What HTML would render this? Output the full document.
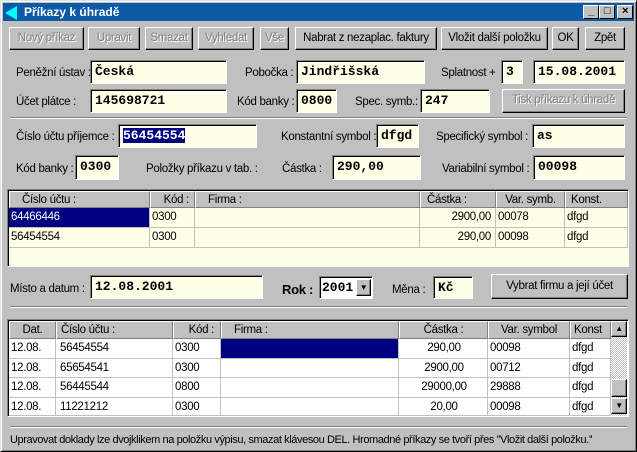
<!DOCTYPE html>
<html><head><meta charset="utf-8"><style>
*{box-sizing:border-box;margin:0;padding:0}
body{width:637px;height:452px;background:#c0c0c0;font-family:"Liberation Sans",Arial,sans-serif;font-size:11.5px;color:#000;position:relative;overflow:hidden;letter-spacing:-0.3px}
.a{position:absolute}
.win{left:0;top:0;width:637px;height:452px;border:1px solid;border-color:#dfdfdf #000 #000 #dfdfdf;box-shadow:inset 1px 1px #fff,inset -1px -1px #808080}
.title{left:3px;top:3px;width:631px;height:18px;background:#0c5aa6;color:#fff;font-weight:bold;font-size:12px;line-height:18px;padding-left:21px;letter-spacing:0}
.tb{top:5px;width:16px;height:14px;background:#c0c0c0;border:1px solid;border-color:#fff #000 #000 #fff;font-size:11px;line-height:11px;text-align:center;font-weight:bold}
.btn{border:1px solid;border-color:#fff #000 #000 #fff;box-shadow:inset -1px -1px #808080;text-align:center;line-height:21px;background:#c0c0c0;white-space:nowrap}
.dis{color:#808080;text-shadow:1px 1px #fff}
.in{background:#ffffe8;border:1px solid;border-color:#808080 #fff #fff #808080;box-shadow:inset 1px 1px #000;font-family:"Liberation Mono",monospace;font-weight:bold;font-size:13px;padding-left:4px;line-height:21px;letter-spacing:0}
.lb{white-space:nowrap;line-height:14px}
.sep{height:2px;border-top:1px solid #808080;border-bottom:1px solid #fff}
.grid{border:1px solid;border-color:#808080 #fff #fff #808080;box-shadow:inset 1px 1px #000}
.hd{background:#c0c0c0;border:1px solid;border-color:#fff #808080 #808080 #fff;line-height:16px;white-space:nowrap;overflow:hidden}
.cl{border-right:1px solid #c0c0c0;border-bottom:1px solid #c0c0c0;line-height:19px;padding-left:2px;white-space:nowrap;overflow:hidden}
.r{text-align:right;padding-right:8px}
</style></head><body>
<div class="a win"></div>
<div class="a title">Příkazy k úhradě</div>
<div class="a" style="left:5px;top:6px;width:0;height:0;border-top:7px solid transparent;border-bottom:7px solid transparent;border-right:12px solid #00ffff"></div>
<div class="a tb" style="left:583px">_</div>
<div class="a tb" style="left:599px">□</div>
<div class="a tb" style="left:617px">×</div>

<div class="a btn dis" style="left:9px;top:27px;width:75px;height:23px">Nový příkaz</div>
<div class="a btn dis" style="left:88px;top:27px;width:52px;height:23px">Upravit</div>
<div class="a btn dis" style="left:145px;top:27px;width:48px;height:23px">Smazat</div>
<div class="a btn dis" style="left:198px;top:27px;width:56px;height:23px">Vyhledat</div>
<div class="a btn dis" style="left:260px;top:27px;width:29px;height:23px">Vše</div>
<div class="a btn" style="left:295px;top:27px;width:142px;height:23px">Nabrat z nezaplac. faktury</div>
<div class="a btn" style="left:441px;top:27px;width:107px;height:23px">Vložit další položku</div>
<div class="a btn" style="left:552px;top:27px;width:27px;height:23px">OK</div>
<div class="a btn" style="left:585px;top:27px;width:40px;height:23px">Zpět</div>

<div class="a lb" style="left:16px;top:66px">Peněžní ústav :</div>
<div class="a in" style="left:90px;top:60px;width:137px;height:24px">Česká</div>
<div class="a lb" style="left:245px;top:66px">Pobočka :</div>
<div class="a in" style="left:296px;top:60px;width:129px;height:24px">Jindřišská</div>
<div class="a lb" style="left:441px;top:66px">Splatnost +</div>
<div class="a in" style="left:501px;top:60px;width:22px;height:24px">3</div>
<div class="a in" style="left:533px;top:60px;width:92px;height:24px">15.08.2001</div>

<div class="a lb" style="left:16px;top:95px">Účet plátce :</div>
<div class="a in" style="left:90px;top:89px;width:137px;height:24px">145698721</div>
<div class="a lb" style="left:237px;top:95px">Kód banky :</div>
<div class="a in" style="left:296px;top:89px;width:41px;height:24px">0800</div>
<div class="a lb" style="left:355px;top:95px">Spec. symb.:</div>
<div class="a in" style="left:420px;top:89px;width:70px;height:24px">247</div>
<div class="a btn dis" style="left:502px;top:89px;width:123px;height:24px">Tisk příkazu k úhradě</div>

<div class="a sep" style="left:10px;top:117px;width:617px"></div>

<div class="a lb" style="left:16px;top:130px">Číslo účtu příjemce :</div>
<div class="a in" style="left:118px;top:124px;width:139px;height:24px"><span style="background:#000080;color:#fff">56454554</span></div>
<div class="a lb" style="left:281px;top:130px">Konstantní symbol :</div>
<div class="a in" style="left:376px;top:124px;width:43px;height:24px">dfgd</div>
<div class="a lb" style="left:436px;top:130px">Specifický symbol :</div>
<div class="a in" style="left:532px;top:124px;width:93px;height:24px">as</div>

<div class="a lb" style="left:16px;top:162px">Kód banky :</div>
<div class="a in" style="left:75px;top:155px;width:44px;height:25px">0300</div>
<div class="a lb" style="left:146px;top:162px">Položky příkazu v tab. :</div>
<div class="a lb" style="left:282px;top:162px">Částka :</div>
<div class="a in" style="left:332px;top:155px;width:89px;height:25px">290,00</div>
<div class="a lb" style="left:442px;top:162px">Variabilní symbol :</div>
<div class="a in" style="left:533px;top:155px;width:92px;height:25px">00098</div>

<div class="a grid" style="left:7px;top:189px;width:622px;height:78px;background:#ffffe8"></div>
<div class="a hd" style="left:9px;top:191px;width:141px;height:17px;padding-left:12px">Číslo účtu :</div>
<div class="a hd" style="left:150px;top:191px;width:45px;height:17px;text-align:right;padding-right:5px">Kód :</div>
<div class="a hd" style="left:195px;top:191px;width:225px;height:17px;padding-left:12px">Firma :</div>
<div class="a hd" style="left:420px;top:191px;width:76px;height:17px;padding-left:6px">Částka :</div>
<div class="a hd" style="left:496px;top:191px;width:69px;height:17px;text-align:center">Var. symb.</div>
<div class="a hd" style="left:565px;top:191px;width:63px;height:17px;padding-left:5px">Konst.</div>
<div class="a cl" style="left:9px;top:208px;width:141px;height:20px;background:#000080;color:#fff">64466446</div>
<div class="a cl" style="left:150px;top:208px;width:45px;height:20px">0300</div>
<div class="a cl" style="left:195px;top:208px;width:225px;height:20px"></div>
<div class="a cl r" style="left:420px;top:208px;width:76px;height:20px;padding-right:4px">2900,00</div>
<div class="a cl" style="left:496px;top:208px;width:69px;height:20px">00078</div>
<div class="a cl" style="left:565px;top:208px;width:63px;height:20px">dfgd</div>
<div class="a cl" style="left:9px;top:228px;width:141px;height:20px">56454554</div>
<div class="a cl" style="left:150px;top:228px;width:45px;height:20px">0300</div>
<div class="a cl" style="left:195px;top:228px;width:225px;height:20px"></div>
<div class="a cl r" style="left:420px;top:228px;width:76px;height:20px;padding-right:4px">290,00</div>
<div class="a cl" style="left:496px;top:228px;width:69px;height:20px">00098</div>
<div class="a cl" style="left:565px;top:228px;width:63px;height:20px">dfgd</div>

<div class="a lb" style="left:10px;top:282px">Místo a datum :</div>
<div class="a in" style="left:90px;top:275px;width:173px;height:24px">12.08.2001</div>
<div class="a lb" style="left:282px;top:283px;font-weight:bold;font-size:13px">Rok :</div>
<div class="a in" style="left:319px;top:276px;width:54px;height:23px;background:#fff;padding-left:2px">2001</div>
<div class="a btn" style="left:356px;top:279px;width:15px;height:17px;line-height:15px;font-size:8px">▼</div>
<div class="a lb" style="left:392px;top:283px">Měna :</div>
<div class="a in" style="left:433px;top:276px;width:40px;height:23px">Kč</div>
<div class="a btn" style="left:491px;top:274px;width:137px;height:25px;line-height:23px">Vybrat firmu a její účet</div>

<div class="a sep" style="left:10px;top:306px;width:617px"></div>

<div class="a grid" style="left:7px;top:319px;width:622px;height:98px;background:#fff"></div>
<div class="a hd" style="left:9px;top:321px;width:47px;height:18px;text-align:center">Dat.</div>
<div class="a hd" style="left:56px;top:321px;width:117px;height:18px;padding-left:4px">Číslo účtu :</div>
<div class="a hd" style="left:173px;top:321px;width:48px;height:18px;text-align:right;padding-right:6px">Kód :</div>
<div class="a hd" style="left:221px;top:321px;width:178px;height:18px;padding-left:12px">Firma :</div>
<div class="a hd" style="left:399px;top:321px;width:89px;height:18px;text-align:center">Částka :</div>
<div class="a hd" style="left:488px;top:321px;width:82px;height:18px;text-align:center">Var. symbol</div>
<div class="a hd" style="left:570px;top:321px;width:41px;height:18px;padding-left:3px">Konst</div>

<div class="a" style="left:611px;top:321px;width:16px;height:95px;background:repeating-conic-gradient(#c0c0c0 0 25%,#fff 0 50%) 0 0/2px 2px"></div>
<div class="a btn" style="left:611px;top:321px;width:16px;height:16px;line-height:14px;font-size:8px">▲</div>
<div class="a btn" style="left:611px;top:379px;width:16px;height:18px"></div>
<div class="a btn" style="left:611px;top:398px;width:16px;height:16px;line-height:14px;font-size:8px">▼</div>

<div class="a cl" style="left:9px;top:339px;width:47px;height:20px">12.08.</div>
<div class="a cl" style="left:56px;top:339px;width:117px;height:20px;padding-left:4px">56454554</div>
<div class="a cl" style="left:173px;top:339px;width:48px;height:20px">0300</div>
<div class="a cl" style="left:221px;top:339px;width:178px;height:20px;background:#000080"></div>
<div class="a cl" style="left:399px;top:339px;width:89px;height:20px;text-align:center">290,00</div>
<div class="a cl" style="left:488px;top:339px;width:82px;height:20px">00098</div>
<div class="a cl" style="left:570px;top:339px;width:41px;height:20px">dfgd</div>

<div class="a cl" style="left:9px;top:359px;width:47px;height:19px;line-height:18px">12.08.</div>
<div class="a cl" style="left:56px;top:359px;width:117px;height:19px;line-height:18px;padding-left:4px">65654541</div>
<div class="a cl" style="left:173px;top:359px;width:48px;height:19px;line-height:18px">0300</div>
<div class="a cl" style="left:221px;top:359px;width:178px;height:19px"></div>
<div class="a cl" style="left:399px;top:359px;width:89px;height:19px;line-height:18px;text-align:center">2900,00</div>
<div class="a cl" style="left:488px;top:359px;width:82px;height:19px;line-height:18px">00712</div>
<div class="a cl" style="left:570px;top:359px;width:41px;height:19px;line-height:18px">dfgd</div>

<div class="a cl" style="left:9px;top:378px;width:47px;height:20px">12.08.</div>
<div class="a cl" style="left:56px;top:378px;width:117px;height:20px;padding-left:4px">56445544</div>
<div class="a cl" style="left:173px;top:378px;width:48px;height:20px">0800</div>
<div class="a cl" style="left:221px;top:378px;width:178px;height:20px"></div>
<div class="a cl" style="left:399px;top:378px;width:89px;height:20px;text-align:center">29000,00</div>
<div class="a cl" style="left:488px;top:378px;width:82px;height:20px">29888</div>
<div class="a cl" style="left:570px;top:378px;width:41px;height:20px">dfgd</div>

<div class="a cl" style="left:9px;top:398px;width:47px;height:18px;line-height:18px">12.08.</div>
<div class="a cl" style="left:56px;top:398px;width:117px;height:18px;line-height:18px;padding-left:4px">11221212</div>
<div class="a cl" style="left:173px;top:398px;width:48px;height:18px;line-height:18px">0300</div>
<div class="a cl" style="left:221px;top:398px;width:178px;height:18px"></div>
<div class="a cl" style="left:399px;top:398px;width:89px;height:18px;line-height:18px;text-align:center">20,00</div>
<div class="a cl" style="left:488px;top:398px;width:82px;height:18px;line-height:18px">00098</div>
<div class="a cl" style="left:570px;top:398px;width:41px;height:18px;line-height:18px">dfgd</div>

<div class="a sep" style="left:10px;top:426px;width:617px"></div>
<div class="a lb" style="left:10px;top:433px;font-size:11px;letter-spacing:-0.4px">Upravovat doklady lze dvojklikem na položku výpisu, smazat klávesou DEL. Hromadné příkazy se tvoří přes ''Vložit další položku.''</div>
</body></html>
